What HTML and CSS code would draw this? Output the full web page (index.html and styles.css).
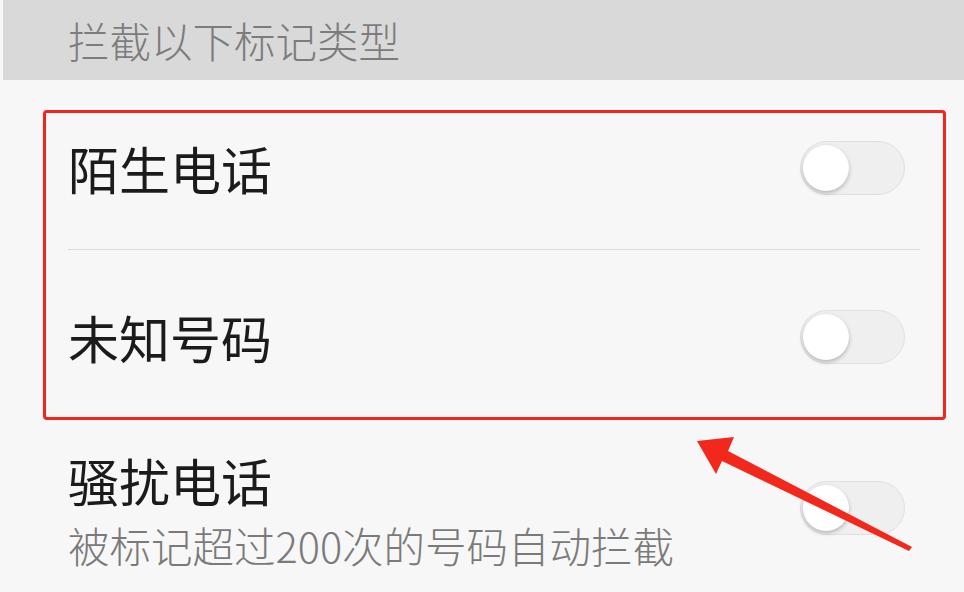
FILE: index.html
```html
<!DOCTYPE html>
<html lang="zh-CN">
<head>
<meta charset="utf-8">
<link rel="stylesheet" href="styles.css">
</head>
<body>
<div class="page">
  <div class="header">拦截以下标记类型</div>
  <div class="main">
    <div class="highlight">
      <div class="row row-first">
        <div class="title">陌生电话</div>
        <div class="toggle"><span class="knob"></span></div>
      </div>
      <div class="divider"></div>
      <div class="row row-second">
        <div class="title">未知号码</div>
        <div class="toggle"><span class="knob"></span></div>
      </div>
    </div>
    <div class="row row-third">
      <div class="texts">
        <div class="title">骚扰电话</div>
        <div class="subtitle">被标记超过200次的号码自动拦截</div>
      </div>
      <div class="toggle"><span class="knob"></span></div>
    </div>
  </div>
  <svg class="arrow" width="964" height="592" viewBox="0 0 964 592">
    <polygon points="697,441 734,437 728,451 912,547 909,551 722,461 716,474" fill="#f2281c"/>
  </svg>
</div>
</body>
</html>
```
FILE: styles.css
```css
html, body {
  margin: 0;
  padding: 0;
}
body {
  background: #f7f7f7;
  font-family: "Noto Sans CJK SC", "Noto Sans", sans-serif;
  width: 964px;
  height: 592px;
  overflow: hidden;
}
.page {
  position: relative;
  width: 964px;
  height: 592px;
}
.header {
  height: 80px;
  box-sizing: border-box;
  margin-left: 3px;
  background: #d9d9d9;
  color: #7c7c7c;
  font-size: 41.5px;
  line-height: 80px;
  padding-left: 65px;
  font-weight: 300;
}
.main {
  padding-top: 30px;
}
.highlight {
  margin-left: 43px;
  width: 903px;
  height: 310px;
  box-sizing: border-box;
  border: 3px solid #f0251d;
  border-radius: 4px;
}
.row {
  display: flex;
  align-items: center;
  justify-content: space-between;
}
.highlight .row {
  padding-left: 22px;
  padding-right: 38px;
}
.row-first {
  padding-top: 28px;
  padding-bottom: 54px;
}
.row-second {
  padding-top: 60px;
  padding-bottom: 52px;
}
.row-third {
  padding: 35px 59px 0 68px;
}
.title {
  font-size: 51px;
  line-height: 1;
  color: #1b1b1b;
}
.texts {
  display: flex;
  flex-direction: column;
  gap: 19px;
}
.subtitle {
  font-size: 41.5px;
  line-height: 1;
  color: #7a7a7a;
  font-weight: 300;
}
.divider {
  height: 1px;
  background: #dcdcdc;
  margin: 0 23px 0 22px;
}
.toggle {
  width: 105px;
  height: 54px;
  box-sizing: border-box;
  border: 1.5px solid #e0e0e0;
  border-radius: 27px;
  background: #efefef;
  display: flex;
  align-items: center;
  padding-left: 2px;
}
.row-third .toggle {
  margin-bottom: 6px;
}
.knob {
  width: 46px;
  height: 46px;
  border-radius: 50%;
  background: #ffffff;
  box-shadow: 0 2px 4px rgba(0, 0, 0, 0.25);
}
.arrow {
  position: absolute;
  left: 0;
  top: 0;
}
```
